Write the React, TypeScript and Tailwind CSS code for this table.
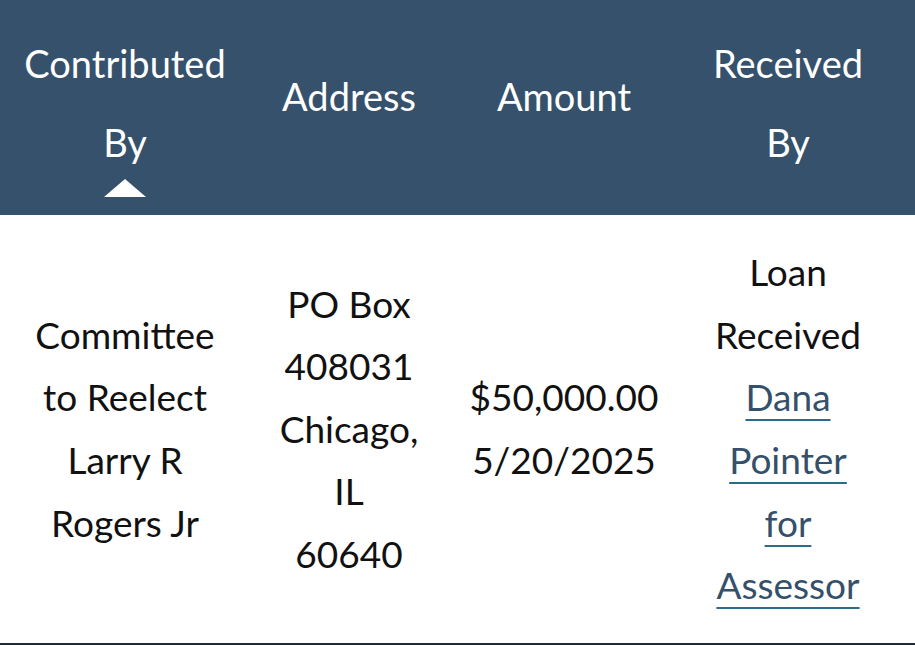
const SortArrow = () => (
  <svg width="42" height="18" viewBox="0 0 42 18" className="mx-auto block">
    <polygon points="21,0 42,18 0,18" fill="#ffffff" />
  </svg>
);

const Link = ({ children }: { children: React.ReactNode }) => (
  <a
    href="#"
    className="text-[#34506a] underline decoration-[#2c6b8a] decoration-2 underline-offset-[8px]"
  >
    {children}
  </a>
);

export default function App() {
  return (
    <div className="w-[915px] h-[645px] bg-white overflow-hidden font-['Lato','Liberation_Sans',sans-serif]">
      <div className="bg-[#35516b] text-white h-[215px] grid grid-cols-[250px_198px_232px_216px] text-[38px] leading-[79px] text-center">
        <div className="pt-[24px]">
          <div>Contributed</div>
          <div>By</div>
          <div className="-mt-[3px]">
            <SortArrow />
          </div>
        </div>
        <div className="pt-[57px]">Address</div>
        <div className="pt-[57px]">Amount</div>
        <div className="pt-[24px]">
          <div>Received</div>
          <div>By</div>
        </div>
      </div>
      <div className="h-[430px] border-b-2 border-[#1f2a3a] grid grid-cols-[250px_198px_232px_216px] items-center text-center text-[37px] leading-[62.6px] text-[#111]">
        <div>
          Committee
          <br />
          to Reelect
          <br />
          Larry R
          <br />
          Rogers Jr
        </div>
        <div>
          PO Box
          <br />
          408031
          <br />
          Chicago,
          <br />
          IL
          <br />
          60640
        </div>
        <div>
          $50,000.00
          <br />
          5/20/2025
        </div>
        <div>
          Loan
          <br />
          Received
          <br />
          <Link>Dana</Link>
          <br />
          <Link>Pointer</Link>
          <br />
          <Link>for</Link>
          <br />
          <Link>Assessor</Link>
        </div>
      </div>
    </div>
  );
}
